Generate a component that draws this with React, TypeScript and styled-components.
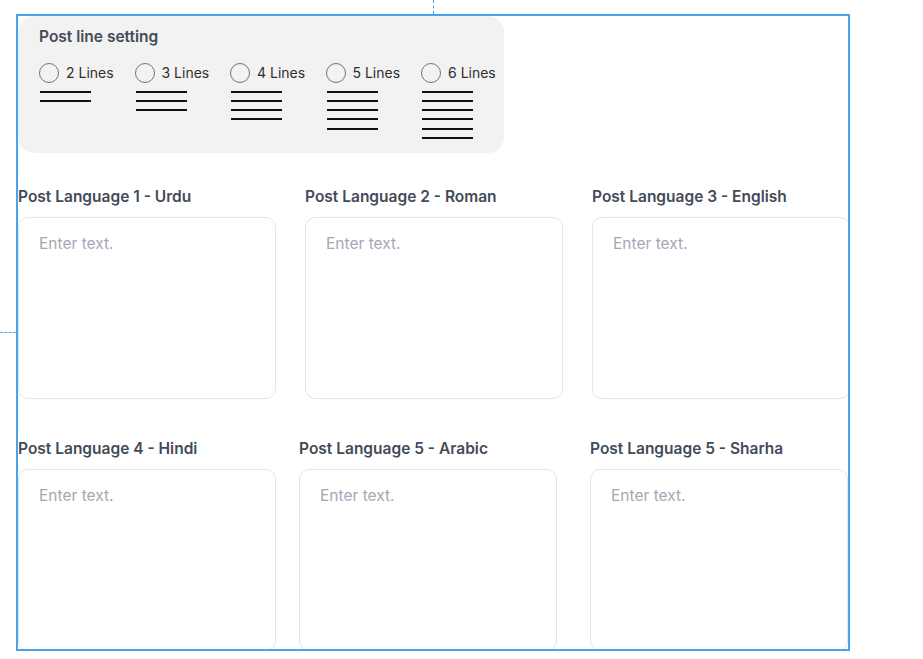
import React from "react";
import styled, { createGlobalStyle } from "styled-components";

const GlobalStyle = createGlobalStyle`
  html, body {
    margin: 0;
    padding: 0;
    background: #ffffff;
    font-family: Inter, "Noto Sans", sans-serif;
  }
`;

const LINE_OPTIONS = [2, 3, 4, 5, 6];

const FIELD_ROWS = [
  {
    cols: "287px 287px 258px",
    fields: ["Post Language 1 - Urdu", "Post Language 2 - Roman", "Post Language 3 - English"],
  },
  {
    cols: "281px 291px 258px",
    fields: ["Post Language 4 - Hindi", "Post Language 5 - Arabic", "Post Language 5 - Sharha"],
  },
];

const PostSettings: React.FC = () => {
  return (
    <Page>
      <GlobalStyle />
      <GuideVertical />
      <GuideHorizontal />
      <Frame>
        <LinePanel>
          <PanelTitle>Post line setting</PanelTitle>
          <Options>
            {LINE_OPTIONS.map((n) => (
              <Option key={n}>
                <RadioLabel>
                  <Radio type="radio" name="post-lines" value={n} />
                  {n} Lines
                </RadioLabel>
                <LinesPreview>
                  {Array.from({ length: n }).map((_, i) => (
                    <PreviewLine key={i} />
                  ))}
                </LinesPreview>
              </Option>
            ))}
          </Options>
        </LinePanel>

        <Fields>
          {FIELD_ROWS.map((row, r) => (
            <FieldRow key={r} cols={row.cols}>
              {row.fields.map((label) => (
                <Field key={label}>
                  <FieldLabel>{label}</FieldLabel>
                  <TextBox placeholder="Enter text." />
                </Field>
              ))}
            </FieldRow>
          ))}
        </Fields>
      </Frame>
    </Page>
  );
};

const Page = styled.div`
  position: relative;
  width: 923px;
  height: 659px;
  padding: 14px 0 0 16px;
  box-sizing: border-box;
  overflow: hidden;
`;

const GuideVertical = styled.div`
  position: absolute;
  left: 433px;
  top: 0;
  height: 14px;
  border-left: 1px dashed #4ba3ea;
`;

const GuideHorizontal = styled.div`
  position: absolute;
  left: 0;
  top: 332px;
  width: 16px;
  border-top: 1px dashed #4ba3ea;
`;

const Frame = styled.div`
  width: 834px;
  height: 637px;
  border: 2px solid #4ba3ea;
  box-sizing: border-box;
  overflow: hidden;
`;

const LinePanel = styled.section`
  width: 486px;
  height: 137px;
  box-sizing: border-box;
  padding: 11px 0 0 21px;
  background: #f2f2f2;
  border-radius: 16px;
`;

const PanelTitle = styled.h3`
  margin: 0;
  font-size: 15.5px;
  line-height: 19px;
  font-weight: 600;
  color: #434b59;
  white-space: nowrap;
`;

const Options = styled.div`
  display: grid;
  grid-template-columns: repeat(5, 95.5px);
  margin-top: 17px;
`;

const Option = styled.div`
  display: flex;
  flex-direction: column;
`;

const RadioLabel = styled.label`
  display: flex;
  align-items: center;
  gap: 7px;
  font-size: 14px;
  line-height: 20px;
  color: #2f2f2f;
  white-space: nowrap;
`;

const Radio = styled.input`
  appearance: none;
  margin: 0;
  width: 20px;
  height: 20px;
  border: 1px solid #70747e;
  border-radius: 50%;
  background: transparent;
  box-sizing: border-box;
`;

const LinesPreview = styled.div`
  display: flex;
  flex-direction: column;
  gap: 7.3px;
  margin: 7.5px 0 0 1px;
`;

const PreviewLine = styled.span`
  display: block;
  width: 51px;
  height: 2px;
  background: #111111;
`;

const Fields = styled.div`
  display: flex;
  flex-direction: column;
  gap: 40px;
  margin-top: 34px;
`;

const FieldRow = styled.div<{ cols: string }>`
  display: grid;
  grid-template-columns: ${(p) => p.cols};
`;

const Field = styled.div`
  display: flex;
  flex-direction: column;
  gap: 11px;
`;

const FieldLabel = styled.label`
  font-size: 15.5px;
  line-height: 19px;
  font-weight: 600;
  color: #434b59;
  white-space: nowrap;
`;

const TextBox = styled.textarea`
  width: 258px;
  height: 182px;
  box-sizing: border-box;
  padding: 16px 20px;
  border: 1.5px solid #e5e5e7;
  border-radius: 10px;
  background: #ffffff;
  font-family: Inter, "Noto Sans", sans-serif;
  font-size: 15.5px;
  line-height: 19px;
  resize: none;
  outline: none;

  &::placeholder {
    color: #a4a8b4;
  }
`;

export default PostSettings;
